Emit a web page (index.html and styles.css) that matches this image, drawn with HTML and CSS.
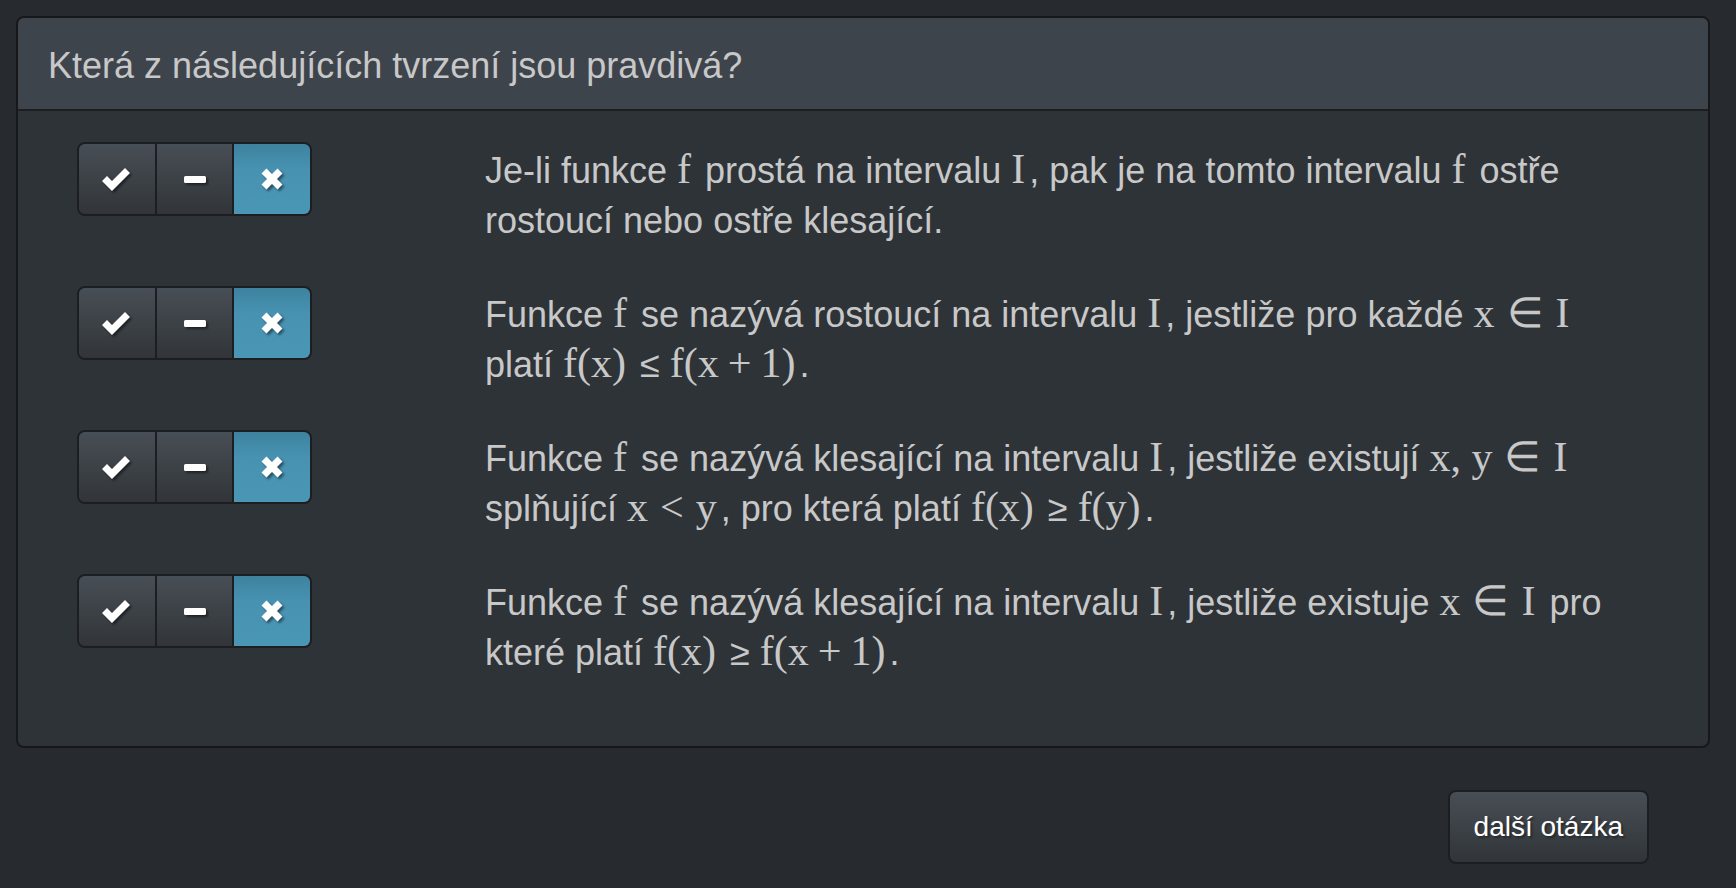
FILE: index.html
```html
<!DOCTYPE html>
<html lang="cs">
<head>
<meta charset="utf-8">
<title>Otázka</title>
<link rel="stylesheet" href="styles.css">
</head>
<body>
<div class="page">
  <section class="panel">
    <header class="panel-heading">
      <h3 class="panel-title">Která z následujících tvrzení jsou pravdivá?</h3>
    </header>
    <div class="panel-body">
      <div class="item">
        <div class="btn-group">
          <button class="tbtn"><svg class="ico" width="29" height="24" viewBox="0 0 29 24"><polygon points="0,14 5,9 10,14 23,1 28,6 10,24" fill="#fff"/></svg></button>
          <button class="tbtn"><svg class="ico" width="22" height="7" viewBox="0 0 22 7"><rect x="0" y="0" width="22" height="7" rx="1.5" fill="#fff"/></svg></button>
          <button class="tbtn active"><svg class="ico" width="22" height="22" viewBox="0 0 22 22"><path d="M3 3 L19 19 M19 3 L3 19" stroke="#fff" stroke-width="7"/></svg></button>
        </div>
        <p class="stmt">Je-li funkce <span class="m">f</span> prostá na intervalu <span class="m">I</span>, pak je na tomto intervalu <span class="m">f</span> ostře rostoucí nebo ostře klesající.</p>
      </div>
      <div class="item">
        <div class="btn-group">
          <button class="tbtn"><svg class="ico" width="29" height="24" viewBox="0 0 29 24"><polygon points="0,14 5,9 10,14 23,1 28,6 10,24" fill="#fff"/></svg></button>
          <button class="tbtn"><svg class="ico" width="22" height="7" viewBox="0 0 22 7"><rect x="0" y="0" width="22" height="7" rx="1.5" fill="#fff"/></svg></button>
          <button class="tbtn active"><svg class="ico" width="22" height="22" viewBox="0 0 22 22"><path d="M3 3 L19 19 M19 3 L3 19" stroke="#fff" stroke-width="7"/></svg></button>
        </div>
        <p class="stmt">Funkce <span class="m">f</span> se nazývá rostoucí na intervalu <span class="m">I</span>, jestliže pro každé <span class="m">x<span class="rel">∈</span>I</span> platí <span class="m">f(x)</span> ≤ <span class="m">f(x<span class="bin">+</span>1)</span>.</p>
      </div>
      <div class="item">
        <div class="btn-group">
          <button class="tbtn"><svg class="ico" width="29" height="24" viewBox="0 0 29 24"><polygon points="0,14 5,9 10,14 23,1 28,6 10,24" fill="#fff"/></svg></button>
          <button class="tbtn"><svg class="ico" width="22" height="7" viewBox="0 0 22 7"><rect x="0" y="0" width="22" height="7" rx="1.5" fill="#fff"/></svg></button>
          <button class="tbtn active"><svg class="ico" width="22" height="22" viewBox="0 0 22 22"><path d="M3 3 L19 19 M19 3 L3 19" stroke="#fff" stroke-width="7"/></svg></button>
        </div>
        <p class="stmt">Funkce <span class="m">f</span> se nazývá klesající na intervalu <span class="m">I</span>, jestliže existují <span class="m">x, y<span class="rel">∈</span>I</span> splňující <span class="m">x<span class="rel">&lt;</span>y</span>, pro která platí <span class="m">f(x)</span> ≥ <span class="m">f(y)</span>.</p>
      </div>
      <div class="item">
        <div class="btn-group">
          <button class="tbtn"><svg class="ico" width="29" height="24" viewBox="0 0 29 24"><polygon points="0,14 5,9 10,14 23,1 28,6 10,24" fill="#fff"/></svg></button>
          <button class="tbtn"><svg class="ico" width="22" height="7" viewBox="0 0 22 7"><rect x="0" y="0" width="22" height="7" rx="1.5" fill="#fff"/></svg></button>
          <button class="tbtn active"><svg class="ico" width="22" height="22" viewBox="0 0 22 22"><path d="M3 3 L19 19 M19 3 L3 19" stroke="#fff" stroke-width="7"/></svg></button>
        </div>
        <p class="stmt">Funkce <span class="m">f</span> se nazývá klesající na intervalu <span class="m">I</span>, jestliže existuje <span class="m">x<span class="rel">∈</span>I</span> pro které platí <span class="m">f(x)</span> ≥ <span class="m">f(x<span class="bin">+</span>1)</span>.</p>
      </div>
    </div>
  </section>
  <div class="actions">
    <button class="next-btn">další otázka</button>
  </div>
</div>
</body>
</html>
```

FILE: styles.css
```css
html, body {
  margin: 0;
  padding: 0;
  background: #272b30;
}

body {
  font-family: "Liberation Sans", Arial, sans-serif;
  color: #c8c8c8;
}

.page {
  padding: 16px 26px 0 16px;
}

.panel {
  background: #2e3338;
  border: 2px solid #16181b;
  border-radius: 8px;
  overflow: hidden;
}

.panel-heading {
  background: #3e444c;
  border-bottom: 2px solid #1c1e22;
  padding: 30px 30px 26px 30px;
}

.panel-title {
  margin: 0;
  font-size: 36px;
  line-height: 35px;
  font-weight: normal;
  color: #c8c8c8;
}

.panel-body {
  padding: 31px 30px 68px 30px;
  display: flex;
  flex-direction: column;
  gap: 40px;
}

.item {
  display: grid;
  grid-template-columns: 437px 1150px;
  min-height: 104px;
  align-items: start;
}

.btn-group {
  display: flex;
  margin-left: 29px;
  width: 235px;
  height: 74px;
  border: 2px solid #1c1e22;
  border-radius: 8px;
  overflow: hidden;
  box-sizing: border-box;
}

.tbtn {
  flex: 1;
  margin: 0;
  padding: 0;
  border: 0;
  display: flex;
  align-items: center;
  justify-content: center;
  background: linear-gradient(#484e55, #3a3f44 60%, #313539);
}

.tbtn + .tbtn {
  border-left: 2px solid #1c1e22;
}

.tbtn.active {
  background: linear-gradient(#3d829f, #4792b1 35%, #4a96b5);
}

.ico {
  display: block;
  filter: drop-shadow(2px 2px 1px rgba(0, 0, 0, 0.45));
}

.stmt {
  margin: 0;
  padding-top: 4px;
  font-size: 36px;
  line-height: 50px;
  color: #c8c8c8;
}

.m {
  font-family: "Liberation Serif", "Times New Roman", serif;
  font-size: 42px;
  line-height: 1;
  padding-right: 4px;
}

.rel {
  margin: 0 12px;
}

.bin {
  margin: 0 9px;
}

.actions {
  display: flex;
  justify-content: flex-end;
  margin-top: 42px;
  padding-right: 61px;
}

.next-btn {
  font-family: "Liberation Sans", Arial, sans-serif;
  font-size: 28px;
  line-height: 40px;
  color: #fff;
  padding: 15px 24px;
  border: 2px solid #1c1e22;
  border-radius: 8px;
  background: linear-gradient(#484e55, #3a3f44 60%, #313539);
  text-shadow: 2px 2px 2px rgba(0, 0, 0, 0.35);
}
```
